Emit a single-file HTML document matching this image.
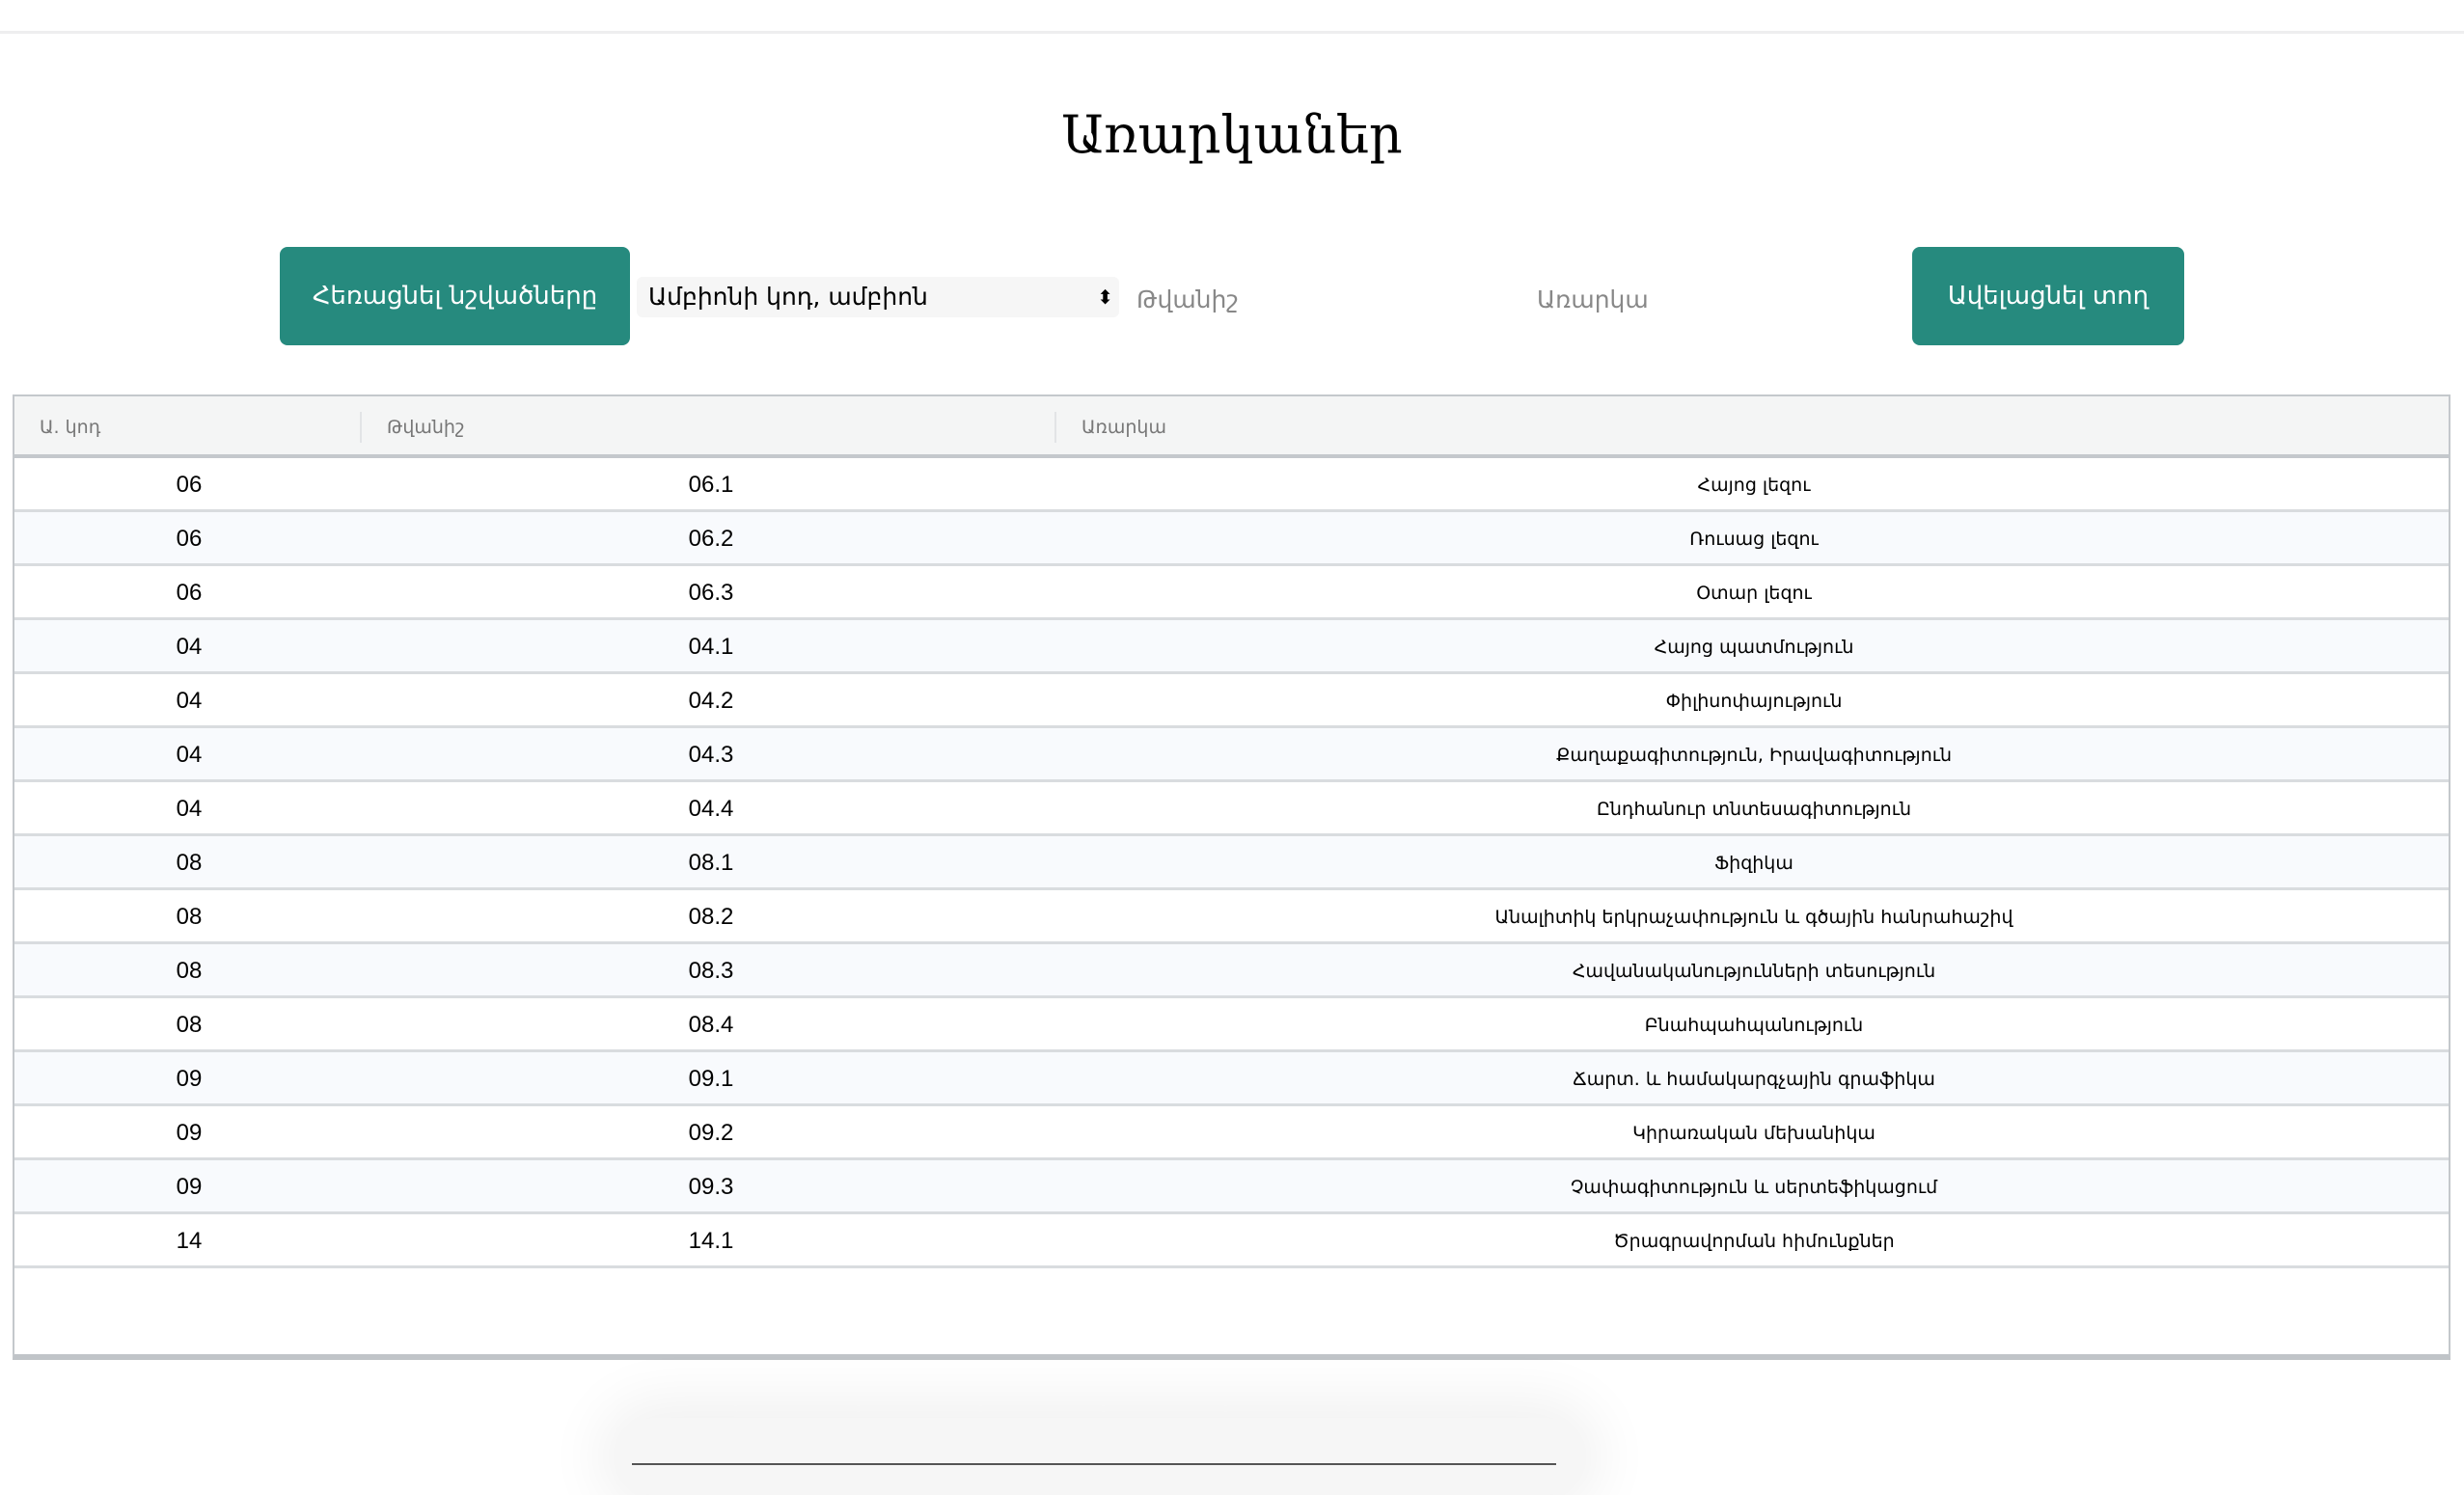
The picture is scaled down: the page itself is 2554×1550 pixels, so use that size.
<!DOCTYPE html>
<html><head><meta charset="utf-8"><style>
*{box-sizing:border-box;margin:0;padding:0}
body{width:2554px;height:1519px;background:#fff;font-family:"Liberation Sans","DejaVu Sans",sans-serif;position:relative;overflow:hidden;color:#000}
.topline{position:absolute;left:0;top:32px;width:2554px;height:3px;background:#eeeeef}
h1{position:absolute;left:0;width:2554px;top:108px;text-align:center;font-family:"DejaVu Serif","DejaVu Sans",serif;font-weight:normal;font-size:54px}
.btn{position:absolute;background:#268a7e;color:#fff;border-radius:8px;font-family:"DejaVu Sans",sans-serif;font-size:26px;display:flex;align-items:center;justify-content:center}
.sel{position:absolute;left:660px;top:287px;width:500px;height:42px;background:#f6f6f6;border-radius:6px;font-family:"DejaVu Sans",sans-serif;font-size:25px;line-height:42px;padding-left:12px}
.ph{position:absolute;top:290px;font-family:"DejaVu Sans",sans-serif;font-size:25px;color:#888;line-height:42px}
.tbl{position:absolute;left:13px;top:409px;width:2527px;height:1001px;border:2px solid #c4c8cc;border-bottom:6px solid #c0c4c8}
.hd{height:64px;background:#f4f5f5;border-bottom:4px solid #c4c8cc;position:relative;font-family:"DejaVu Sans",sans-serif;font-size:19px;color:#777}
.hd span{position:absolute;top:21px}
.div{position:absolute;top:16px;width:2px;height:32px;background:#e2e4e6}
.row{height:56px;border-bottom:3px solid #d9dcdf;position:relative;font-size:24px}
.row:nth-child(even){background:#f8fafd}
.row span{position:absolute;top:14px;transform:translateX(-50%);white-space:nowrap}
.row .c3{font-family:"DejaVu Sans",sans-serif;font-size:19px;top:17px}
.shadow{position:absolute;left:640px;top:1470px;width:1000px;height:80px;border-radius:40px;box-shadow:0 0 60px 20px rgba(0,0,0,0.06);background:#f6f6f6}
.bl{position:absolute;left:655px;top:1517px;width:958px;height:2px;background:#555}
</style></head><body>
<div class="topline"></div>
<h1>Առարկաներ</h1>
<div class="btn" style="left:290px;top:256px;width:363px;height:102px">Հեռացնել նշվածները</div>
<div class="sel">Ամբիոնի կոդ, ամբիոն<span style="position:absolute;right:6px;top:0;font-size:20px">⬍</span></div>
<div class="ph" style="left:1178px">Թվանիշ</div>
<div class="ph" style="left:1593px">Առարկա</div>
<div class="btn" style="left:1982px;top:256px;width:282px;height:102px">Ավելացնել տող</div>
<div class="tbl">
<div class="hd"><span style="left:26px">Ա. կոդ</span><div class="div" style="left:358px"></div><span style="left:386px">Թվանիշ</span><div class="div" style="left:1078px"></div><span style="left:1106px">Առարկա</span></div>
<div class="rows">
<div class="row"><span style="left:181px">06</span><span style="left:722px">06.1</span><span class="c3" style="left:1803px">Հայոց լեզու</span></div>
<div class="row"><span style="left:181px">06</span><span style="left:722px">06.2</span><span class="c3" style="left:1803px">Ռուսաց լեզու</span></div>
<div class="row"><span style="left:181px">06</span><span style="left:722px">06.3</span><span class="c3" style="left:1803px">Օտար լեզու</span></div>
<div class="row"><span style="left:181px">04</span><span style="left:722px">04.1</span><span class="c3" style="left:1803px">Հայոց պատմություն</span></div>
<div class="row"><span style="left:181px">04</span><span style="left:722px">04.2</span><span class="c3" style="left:1803px">Փիլիսոփայություն</span></div>
<div class="row"><span style="left:181px">04</span><span style="left:722px">04.3</span><span class="c3" style="left:1803px">Քաղաքագիտություն, Իրավագիտություն</span></div>
<div class="row"><span style="left:181px">04</span><span style="left:722px">04.4</span><span class="c3" style="left:1803px">Ընդհանուր տնտեսագիտություն</span></div>
<div class="row"><span style="left:181px">08</span><span style="left:722px">08.1</span><span class="c3" style="left:1803px">Ֆիզիկա</span></div>
<div class="row"><span style="left:181px">08</span><span style="left:722px">08.2</span><span class="c3" style="left:1803px">Անալիտիկ երկրաչափություն և գծային հանրահաշիվ</span></div>
<div class="row"><span style="left:181px">08</span><span style="left:722px">08.3</span><span class="c3" style="left:1803px">Հավանականությունների տեսություն</span></div>
<div class="row"><span style="left:181px">08</span><span style="left:722px">08.4</span><span class="c3" style="left:1803px">Բնահպահպանություն</span></div>
<div class="row"><span style="left:181px">09</span><span style="left:722px">09.1</span><span class="c3" style="left:1803px">Ճարտ. և համակարգչային գրաֆիկա</span></div>
<div class="row"><span style="left:181px">09</span><span style="left:722px">09.2</span><span class="c3" style="left:1803px">Կիրառական մեխանիկա</span></div>
<div class="row"><span style="left:181px">09</span><span style="left:722px">09.3</span><span class="c3" style="left:1803px">Չափագիտություն և սերտեֆիկացում</span></div>
<div class="row"><span style="left:181px">14</span><span style="left:722px">14.1</span><span class="c3" style="left:1803px">Ծրագրավորման հիմունքներ</span></div>
</div>
</div>
<div class="shadow"></div>
<div class="bl"></div>
</body></html>
